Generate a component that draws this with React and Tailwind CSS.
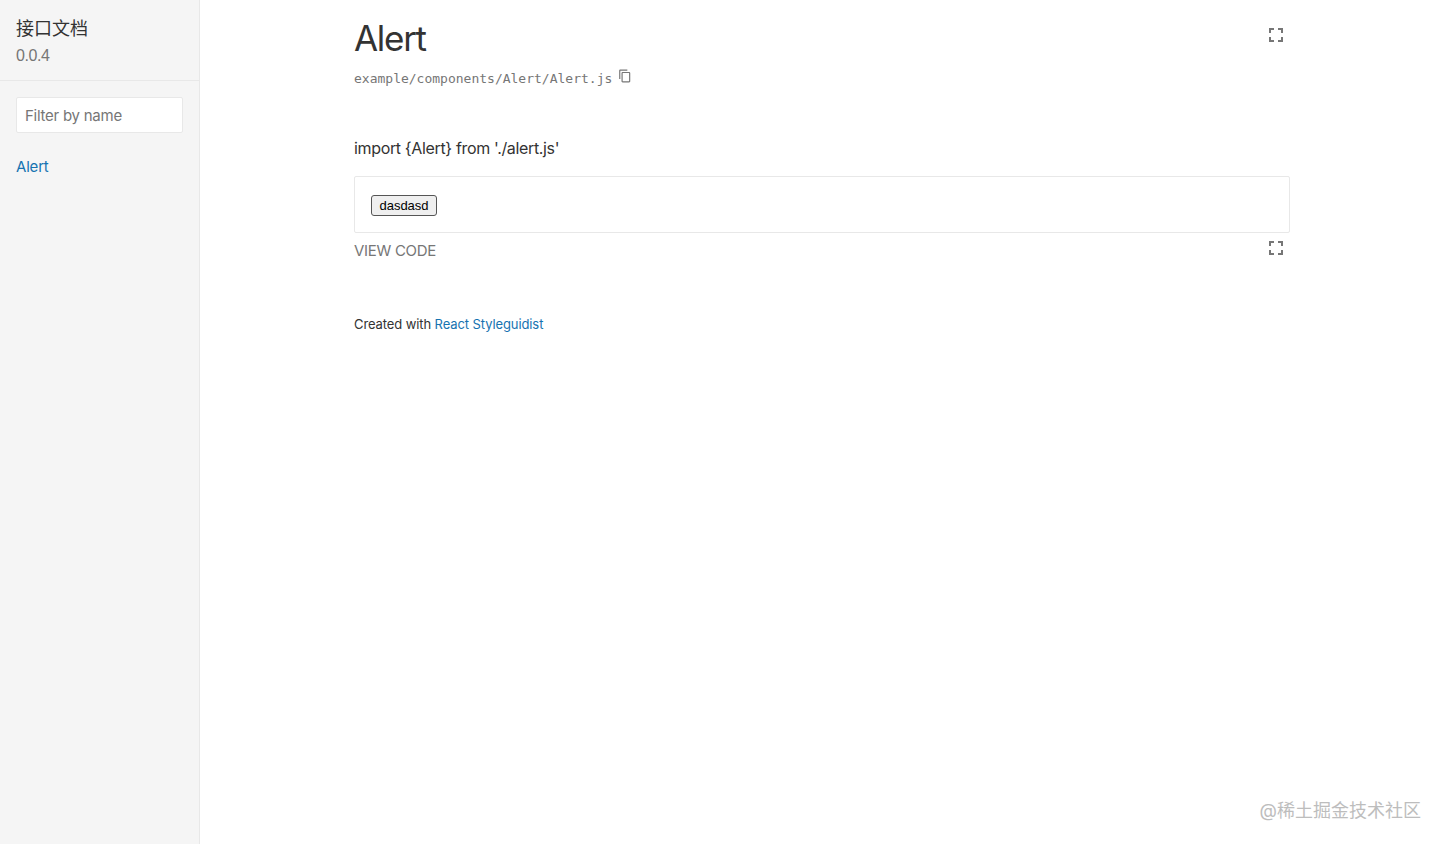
import React from 'react';

const sans = 'font-["Inter","Noto_Sans_CJK_SC",sans-serif]';

const FullscreenIcon = () => (
    <svg viewBox="0 0 24 24" className="w-6 h-6 fill-[#767676]">
        <path d="M7 14H5v5h5v-2H7v-3zm-2-4h2V7h3V5H5v5zm12 7h-3v2h5v-5h-2v3zM14 5v2h3v3h2V5h-5z" />
    </svg>
);

const CopyIcon = () => (
    <svg viewBox="0 0 24 24" className="w-[14px] h-[14px] fill-[#767676]">
        <path d="M16 1H4c-1.1 0-2 .9-2 2v14h2V3h12V1zm3 4H8c-1.1 0-2 .9-2 2v14c0 1.1.9 2 2 2h11c1.1 0 2-.9 2-2V7c0-1.1-.9-2-2-2zm0 16H8V7h11v14z" />
    </svg>
);

const Sidebar = () => (
    <aside className="w-[200px] shrink-0 bg-[#f5f5f5] border-r border-[#e8e8e8]">
        <header className="h-[81px] px-4 pt-[15px] border-b border-[#e8e8e8]">
            <h1 className="text-[18px] leading-[27px] text-[#333333]">接口文档</h1>
            <p className="text-[16px] leading-[24px] mt-[2px] tracking-[-0.4px] text-[#767676] font-['Liberation_Sans',sans-serif]">0.0.4</p>
        </header>
        <div className="px-4 pt-4">
            <input
                readOnly
                placeholder="Filter by name"
                className="w-full h-9 px-2 bg-white border border-[#e8e8e8] rounded-[2px] text-[15px] tracking-[-0.25px] outline-none placeholder:text-[#767676]"
            />
            <a href="#alert" className="block mt-[23px] text-[15px] leading-[22px] tracking-[-0.2px] text-[#1673b1]">Alert</a>
        </div>
    </aside>
);

const Main = () => (
    <main className="flex-1 min-w-0">
        <div className="w-[1000px] mx-auto px-8">
            <div className="flex items-start justify-between pt-[15px]">
                <div>
                    <h2 className="text-[35px] leading-[47px] tracking-[-1.3px] text-[#333333]">Alert</h2>
                    <div className="flex items-start mt-[7px] h-5">
                        <span className="font-['DejaVu_Sans_Mono',monospace] text-[13px] leading-5 text-[#767676]">example/components/Alert/Alert.js</span>
                        <span className="ml-[6px]"><CopyIcon /></span>
                    </div>
                </div>
                <button className="p-0 mr-[2px] mt-2"><FullscreenIcon /></button>
            </div>
            <p className="mt-[47px] text-[16px] leading-6 tracking-[-0.35px] text-[#333333]">import {'{'}Alert{'}'} from './alert.js'</p>
            <div className="mt-4 h-[57px] px-4 pt-[18px] border border-[#e8e8e8] rounded-[2px]">
                <button className="block h-[21px] w-[66px] bg-[#efefef] border border-[#555555] rounded-[3px] text-[13px] leading-[19px] text-black font-['Liberation_Sans',sans-serif]">dasdasd</button>
            </div>
            <div className="flex items-start justify-between h-6">
                <span className="mt-[6px] text-[15px] leading-[24px] tracking-[-0.3px] text-[#767676]">VIEW CODE</span>
                <button className="p-0 mr-[2px] mt-[3px]"><FullscreenIcon /></button>
            </div>
            <footer className="mt-[57px] text-[13px] leading-[20px] tracking-[-0.1px] text-[#333333]">
                Created with <a href="#styleguidist" className="text-[#1673b1]">React Styleguidist</a>
            </footer>
        </div>
    </main>
);

export default function App() {
    return (
        <div className={`relative flex min-h-[844px] bg-white ${sans}`}>
            <Sidebar />
            <Main />
            {/* watermark sits over the page */}
            <span className="absolute right-[23px] top-[798px] text-[18px] leading-[26px] text-[#bdbdbd]">@稀土掘金技术社区</span>
        </div>
    );
}
